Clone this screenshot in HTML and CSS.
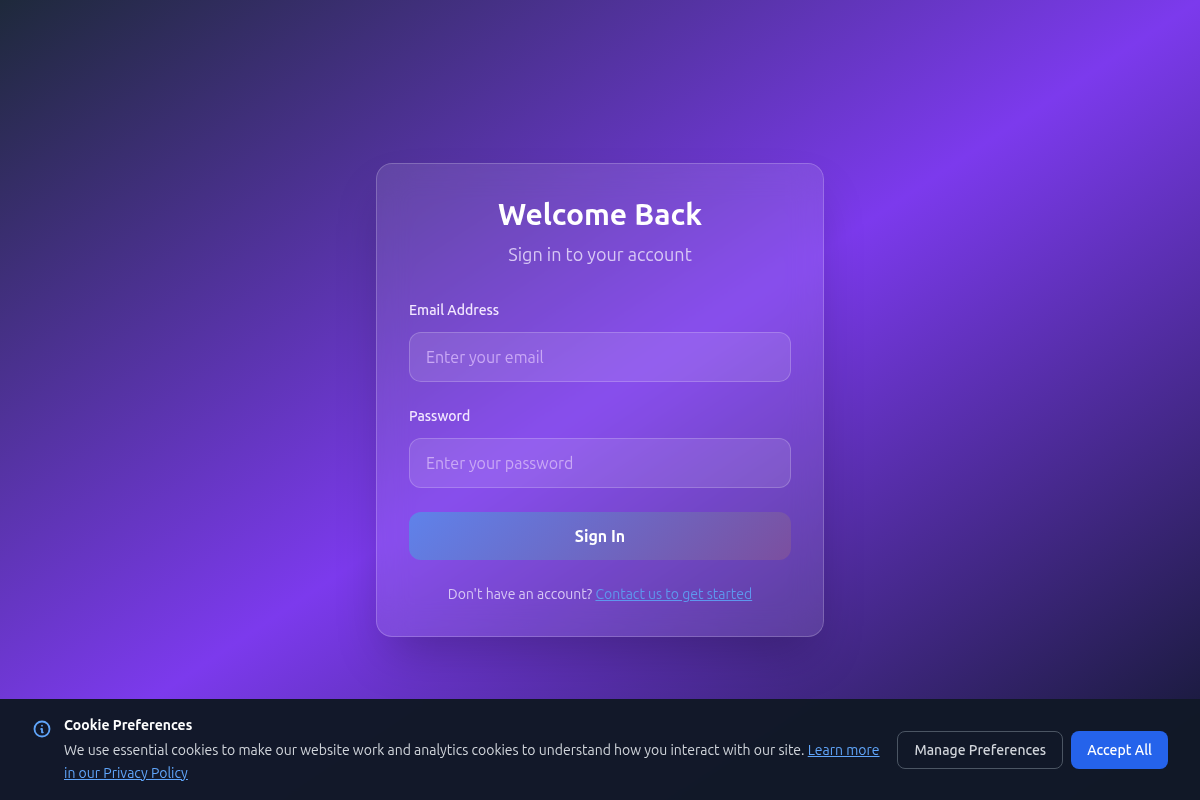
FILE: index.html
```html
<!DOCTYPE html>
<html lang="en">
<head>
<meta charset="utf-8">
<title>Sign in</title>
<link rel="stylesheet" href="styles.css">
</head>
<body>
<main class="stage">
  <section class="card">
    <header class="card-head">
      <h1 class="title">Welcome Back</h1>
      <p class="subtitle">Sign in to your account</p>
    </header>
    <form class="form">
      <div class="field">
        <label class="label" for="email">Email Address</label>
        <input class="input" id="email" type="email" placeholder="Enter your email">
      </div>
      <div class="field">
        <label class="label" for="password">Password</label>
        <input class="input" id="password" type="password" placeholder="Enter your password">
      </div>
      <button class="submit" type="button">Sign In</button>
    </form>
    <p class="foot">Don't have an account? <a class="foot-link" href="#">Contact us to get started</a></p>
  </section>
</main>
<aside class="cookie">
  <svg class="cookie-icon" viewBox="0 0 24 24" width="20" height="20" fill="none" stroke="currentColor" stroke-width="2.2" stroke-linecap="round" stroke-linejoin="round">
    <path d="M13 16h-1v-4h-1m1-4h.01M21 12a9 9 0 11-18 0 9 9 0 0118 0z"></path>
  </svg>
  <div class="cookie-text">
    <h2 class="cookie-title">Cookie Preferences</h2>
    <p class="cookie-body">We use essential cookies to make our website work and analytics cookies to understand how you interact with our site. <a class="cookie-link" href="#">Learn more in our Privacy Policy</a></p>
  </div>
  <div class="cookie-actions">
    <button class="btn btn-ghost" type="button">Manage Preferences</button>
    <button class="btn btn-primary" type="button">Accept All</button>
  </div>
</aside>
</body>
</html>
```
FILE: styles.css
```css
* { box-sizing: border-box; }
html, body { margin: 0; height: 100%; }
body {
  font-family: Ubuntu, system-ui, "Noto Sans", sans-serif;
  height: 800px;
  overflow: hidden;
  background: linear-gradient(to bottom right, #1e293b 0%, #7c3aed 50%, #0f172a 100%);
  color: #fff;
}
.stage {
  height: 800px;
  display: flex;
  align-items: center;
  justify-content: center;
}
.card {
  width: 448px;
  padding: 32px;
  border-radius: 16px;
  border: 1px solid rgba(255,255,255,.2);
  background: rgba(255,255,255,.1);
  backdrop-filter: blur(16px);
  box-shadow: 0 25px 50px -12px rgba(0,0,0,.25);
}
.card-head { text-align: center; margin-bottom: 32px; }
.title { margin: 0 0 8px; font-size: 30px; line-height: 36px; font-weight: 700; }
.subtitle { margin: 0; font-size: 18px; line-height: 28px; font-weight: 400; color: #d8c8f5; }
.field { margin-bottom: 24px; }
.label { display: block; margin-bottom: 12px; font-size: 14px; line-height: 20px; font-weight: 500; color: #f3e8ff; }
.input {
  display: block;
  width: 100%;
  height: 50px;
  padding: 12px 16px;
  border-radius: 12px;
  border: 1px solid rgba(255,255,255,.2);
  background: rgba(255,255,255,.1);
  color: #fff;
  font: inherit;
  font-size: 16px;
}
.input::placeholder { color: #c9a8f5; opacity: 1; font-weight: 400; }
.submit {
  display: block;
  width: 100%;
  height: 48px;
  border: 0;
  border-radius: 12px;
  background: linear-gradient(135deg, #5f82ea 0%, #7b4f9f 100%);
  color: #fff;
  font: inherit;
  font-weight: 700;
  font-size: 16px;
}
.foot { margin: 24px 0 0; text-align: center; font-size: 14px; line-height: 20px; font-weight: 400; color: #d8c8f5; }
.foot-link { color: #5e98ee; }
.cookie {
  position: fixed;
  left: 0; right: 0; bottom: 0;
  display: flex;
  align-items: center;
  gap: 12px;
  height: 101px;
  padding: 0 32px;
  background: rgba(17,24,39,.99);
  backdrop-filter: blur(4px);
}
.cookie-icon { flex: none; color: #60a5fa; align-self: flex-start; margin-top: 20px; }
.cookie-text { flex: 1; }
.cookie-title { margin: 0 0 4px; font-size: 14px; line-height: 20px; font-weight: 700; }
.cookie-body { margin: 0; font-size: 14px; line-height: 23px; font-weight: 400; color: #d1d5db; }
.cookie-link { color: #60a5fa; }
.cookie-actions { display: flex; gap: 8px; margin-left: 4px; }
.btn { height: 38px; padding: 0 16px; border-radius: 8px; font: inherit; font-size: 14px; font-weight: 500; color: #fff; }
.btn-ghost { border: 1px solid #4b5563; background: transparent; color: #d1d5db; }
.btn-primary { border: 0; background: #2563eb; }
```
